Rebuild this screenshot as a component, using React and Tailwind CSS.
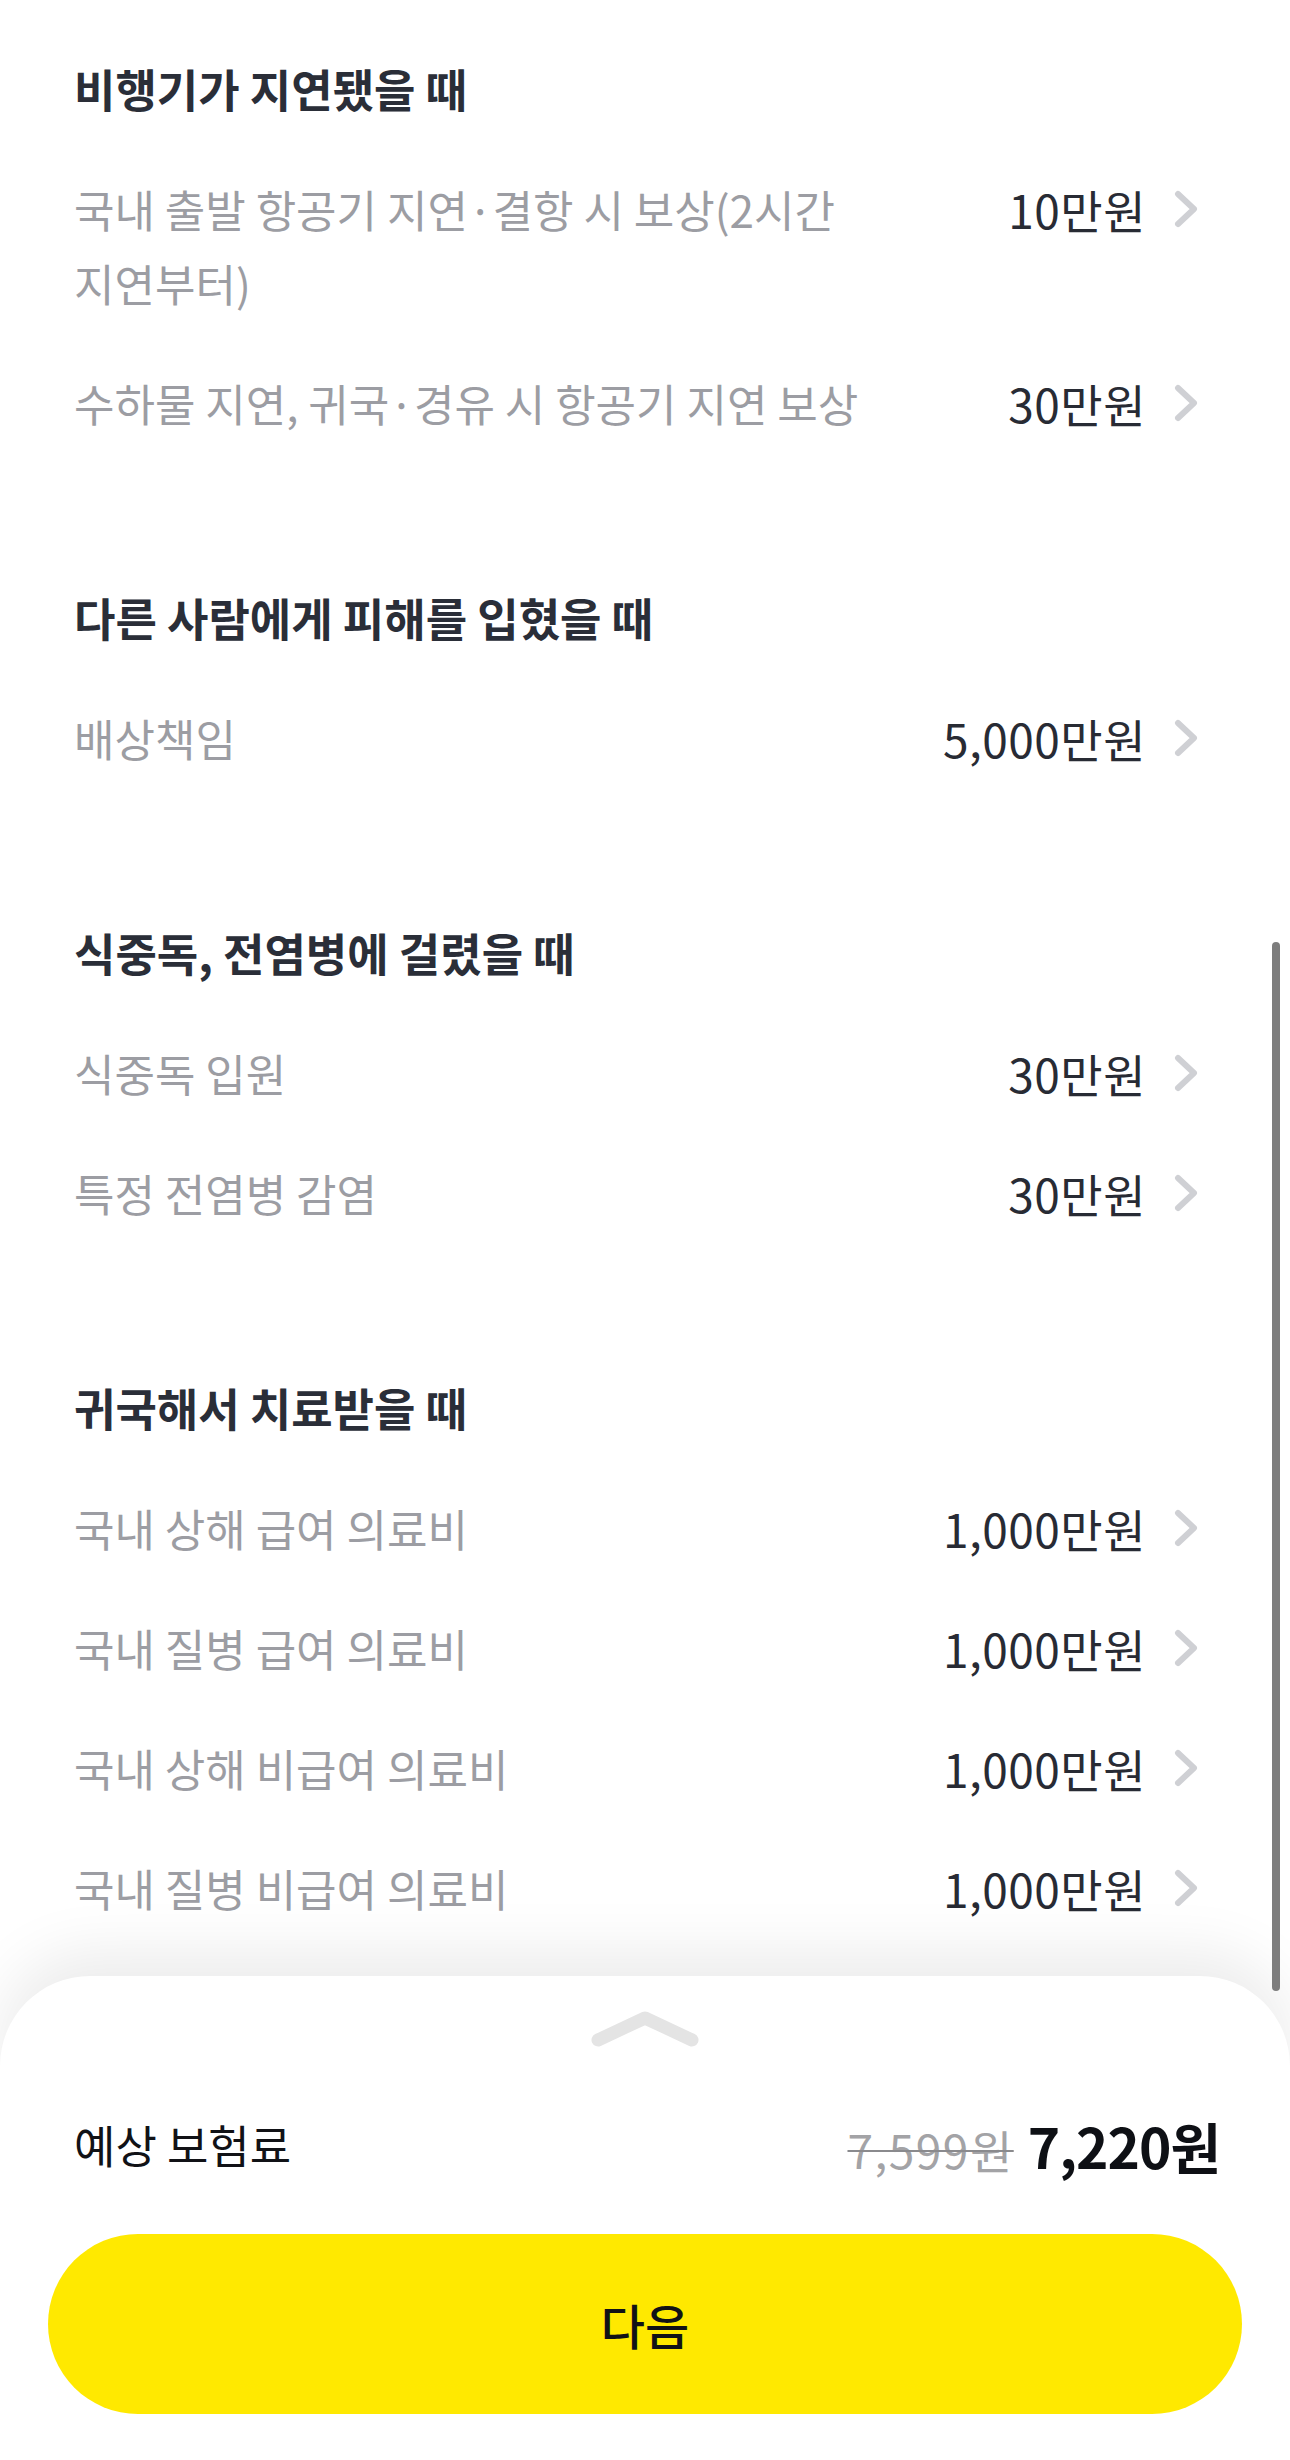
import React from "react";

const sections = [
  {
    title: "비행기가 지연됐을 때",
    rows: [
      { label: ["국내 출발 항공기 지연·결항 시 보상(2시간", "지연부터)"], value: "10만원" },
      { label: ["수하물 지연, 귀국·경유 시 항공기 지연 보상"], value: "30만원" },
    ],
  },
  {
    title: "다른 사람에게 피해를 입혔을 때",
    rows: [{ label: ["배상책임"], value: "5,000만원" }],
  },
  {
    title: "식중독, 전염병에 걸렸을 때",
    rows: [
      { label: ["식중독 입원"], value: "30만원" },
      { label: ["특정 전염병 감염"], value: "30만원" },
    ],
  },
  {
    title: "귀국해서 치료받을 때",
    rows: [
      { label: ["국내 상해 급여 의료비"], value: "1,000만원" },
      { label: ["국내 질병 급여 의료비"], value: "1,000만원" },
      { label: ["국내 상해 비급여 의료비"], value: "1,000만원" },
      { label: ["국내 질병 비급여 의료비"], value: "1,000만원" },
    ],
  },
];

function ChevronRight() {
  return (
    <svg width="24" height="40" viewBox="0 0 24 40" className="shrink-0">
      <polyline
        points="4,5 20,20 4,35"
        fill="none"
        stroke="#cfd0d4"
        strokeWidth="6"
        strokeLinecap="round"
        strokeLinejoin="round"
      />
    </svg>
  );
}

function Row({ label, value }) {
  return (
    <div className="flex items-center justify-between py-[23px]">
      <div className="text-[44px] leading-[74px] tracking-[0px] text-[#9c9da3]">
        {label.map((l, i) => (
          <div key={i}>{l}</div>
        ))}
      </div>
      <div className="flex items-center gap-[28px] self-start">
        <span className="text-[46px] leading-[74px] tracking-[0.5px] text-[#282b34]">
          {value}
        </span>
        <ChevronRight />
      </div>
    </div>
  );
}

export default function App() {
  return (
    <div className="relative w-[1290px] h-[2460px] overflow-hidden bg-white font-['Noto_Sans_CJK_KR',sans-serif]">
      <div className="pt-[29px] pl-[74px] pr-[92px]">
        {sections.map((s, i) => (
          <div key={i} className="mb-[95px]">
            <div className="h-[120px] flex items-center text-[45px] font-semibold tracking-[0px] text-[#2a2e38]">
              {s.title}
            </div>
            {s.rows.map((r, j) => (
              <Row key={j} label={r.label} value={r.value} />
            ))}
          </div>
        ))}
      </div>

      {/* bottom sheet */}
      <div className="absolute left-0 right-0 bottom-0 h-[484px] bg-white rounded-t-[90px] shadow-[0_-24px_60px_rgba(0,0,0,0.08)] flex flex-col">
        <div className="flex justify-center mt-[32px]">
          <svg width="110" height="44" viewBox="0 0 110 44">
            <polyline
              points="8,32 55,10 102,32"
              fill="none"
              stroke="#e4e4e4"
              strokeWidth="13"
              strokeLinecap="round"
              strokeLinejoin="round"
            />
          </svg>
        </div>
        <div className="mt-[53px] h-[80px] flex items-center justify-between pl-[74px] pr-[70px]">
          <span className="text-[45px] tracking-[0px] text-[#111216]">예상 보험료</span>
          <div className="flex items-baseline gap-[14px]">
            <span className="text-[46px] tracking-[1.5px] text-[#a3a3a6] line-through decoration-2 decoration-[#8a8a8d]">
              7,599원
            </span>
            <span className="text-[55px] font-bold tracking-[-1px] text-[#0e1015]">7,220원</span>
          </div>
        </div>
        <div className="mt-[49px] mx-[48px] h-[180px] rounded-full bg-[#ffe900] flex items-center justify-center">
          <span className="text-[48px] font-medium tracking-[0px] text-[#111216]">다음</span>
        </div>
      </div>

      {/* scrollbar */}
      <div className="absolute left-[1272px] top-[942px] w-[8px] h-[1049px] rounded-full bg-[#7d7d7d]" />
    </div>
  );
}
